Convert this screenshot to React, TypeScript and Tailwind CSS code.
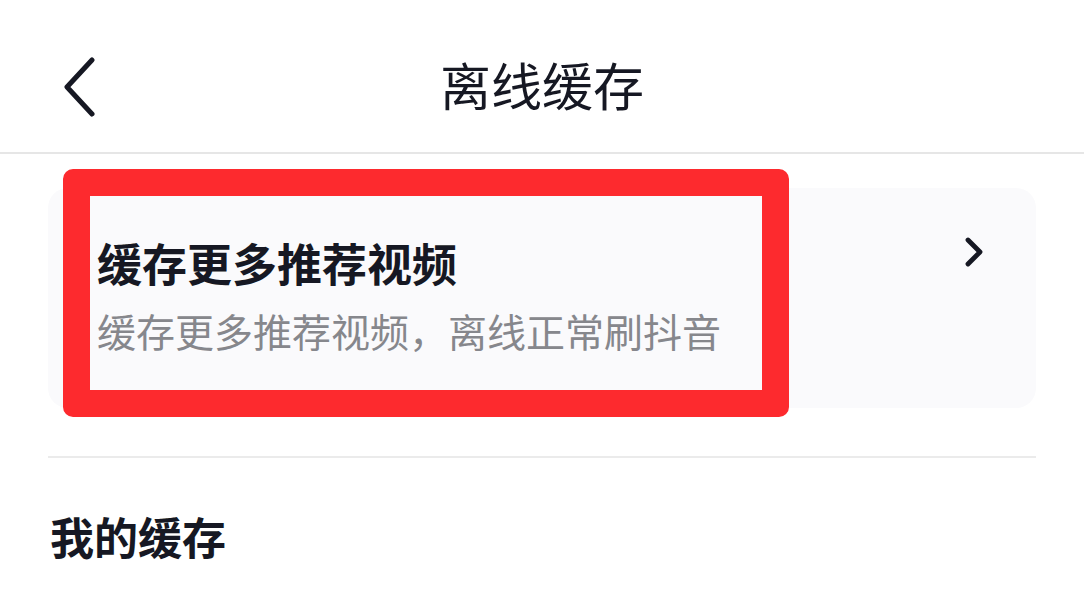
import { ChevronRight } from "lucide-react";

function BackIcon() {
  return (
    <svg width="36" height="60" viewBox="0 0 36 60" fill="none">
      <path d="M31 3 L6 30 L31 57" stroke="#161823" strokeWidth="5" strokeLinecap="round" strokeLinejoin="round" />
    </svg>
  );
}

export default function App() {
  return (
    <div
      className="w-[1084px] h-[603px] overflow-hidden bg-white text-[#161823]"
      style={{ fontFamily: '"Noto Sans CJK SC", "Noto Sans", sans-serif' }}
    >
      {/* header */}
      <header className="relative h-[154px] flex items-center justify-center border-b-2 border-[#e6e6e6]">
        <button className="absolute left-[61px] top-[57px]">
          <BackIcon />
        </button>
        <h1 className="text-[51px] leading-none font-normal mt-[16px]">离线缓存</h1>
      </header>

      <div className="px-[48px]">
        {/* recommend card */}
        <div className="relative mt-[34px] h-[220px] rounded-[20px] bg-[#fafafc] pl-[49px] pr-[50px] pt-[52px] flex justify-between">
          <div className="flex flex-col">
            <div className="text-[45px] leading-none font-bold">缓存更多推荐视频</div>
            <div className="mt-[26px] text-[39px] leading-none text-[#86878c]">
              缓存更多推荐视频，离线正常刷抖音
            </div>
          </div>
          <ChevronRight className="mt-[-12px] w-[48px] h-[48px] mr-[-12px] text-[#161823]" strokeWidth={2.4} />

          {/* highlight annotation */}
          <div className="absolute left-[15px] top-[-19px] w-[726px] h-[248px] border-[27px] border-[#fd2a2e] rounded-[10px] pointer-events-none" />
        </div>

        <div className="mt-[48px] h-[2px] bg-[#ebebeb]" />

        <h2 className="mt-[56px] ml-[2px] text-[44px] leading-none font-bold">我的缓存</h2>
      </div>
    </div>
  );
}
